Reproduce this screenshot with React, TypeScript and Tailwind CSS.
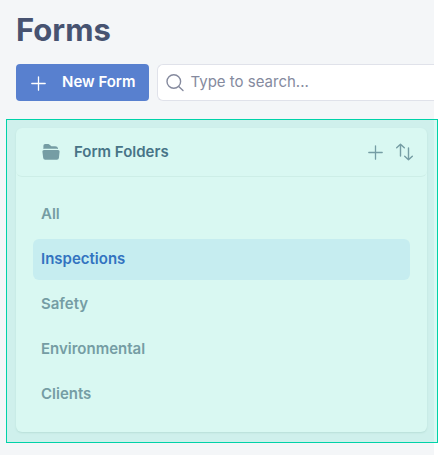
import React, { useState } from 'react';

const FOLDERS = ['All', 'Inspections', 'Safety', 'Environmental', 'Clients'];

const PlusIcon: React.FC<{ className?: string }> = ({ className }) => (
  <svg viewBox="0 0 16 16" fill="none" stroke="currentColor" strokeWidth="1.3" strokeLinecap="round" className={className} aria-hidden="true">
    <path d="M8.5 1.8v13.4M1.8 8.5h13.4" />
  </svg>
);

const SearchIcon: React.FC = () => (
  <svg viewBox="0 0 18 18" fill="none" stroke="currentColor" strokeWidth="1.4" strokeLinecap="round" className="h-[18px] w-[18px] shrink-0 text-[#858a9e]" aria-hidden="true">
    <circle cx="7.8" cy="7.5" r="6.8" />
    <path d="M12.7 12.4l4.3 4.1" />
  </svg>
);

const FolderIcon: React.FC = () => (
  <svg viewBox="0 0 18 18" fill="currentColor" className="h-[18px] w-[18px]" aria-hidden="true">
    <path d="M1.4 6.1V2.8Q1.4 1.1 3.1 1.1H6.3Q7 1.1 7.6 1.7L9.4 3.2H13.2Q15.6 3.2 16 5.2V6.1Q15.6 5.8 15 5.8H2.5Q1.8 5.8 1.4 6.1Z" />
    <path d="M2 7.1H16Q17.7 7.1 17.6 8.6L16.9 15Q16.7 16.7 14.9 16.7H3.2Q1.4 16.7 1.2 15L.4 8.6Q.3 7.1 2 7.1Z" />
  </svg>
);

const SortIcon: React.FC = () => (
  <svg viewBox="0 0 18 18" fill="none" stroke="currentColor" strokeWidth="1.4" strokeLinecap="round" strokeLinejoin="round" className="h-[18px] w-[18px]" aria-hidden="true">
    <path d="M5.5 13V1.2M1.7 4.8l3.8-3.6 3.8 3.6M13.5 5v11.8M9.7 13.2l3.8 3.6 3.8-3.6" />
  </svg>
);

const App: React.FC = () => {
  const [selected, setSelected] = useState('Inspections');
  const [query, setQuery] = useState('');

  return (
    <div className="overflow-hidden bg-white pr-2 pb-1 font-['Inter',sans-serif]">
      <main className="bg-[#f4f6f8] py-3">
        <h1 className="px-4 text-[31px] leading-9 font-bold text-[#475371]">Forms</h1>

        <div className="mt-4 flex h-[37px] gap-2 pl-4">
          <button className="flex shrink-0 items-center gap-4 rounded bg-[#5880cf] px-3.5 text-[15px] font-semibold text-white">
            <PlusIcon className="h-4 w-4" />
            New Form
          </button>
          <label className="flex min-w-0 flex-1 items-center gap-1.5 rounded-l-md border border-r-0 border-[#e0e2ea] bg-white px-2">
            <SearchIcon />
            <input
              type="text"
              aria-label="Search forms"
              placeholder="Type to search..."
              value={query}
              onChange={(e) => setQuery(e.target.value)}
              className="min-w-0 flex-1 bg-transparent text-[15px] text-[#475371] outline-none placeholder:text-[#858a9e]"
            />
          </label>
        </div>

        <section className="mt-[18px] -mr-1 ml-1.5 border border-[#00d2a8] bg-[#00d2a8]/15 pt-2 pr-2.5 pb-2.5 pl-[9px]">
          <div className="rounded-md bg-[#d9f8f2] shadow-[0_1px_2px_#b9dfd8]">
            <header className="flex h-[49px] items-center rounded-md border-b border-[#cdeee7] pr-3.5 pl-[26px] text-[#759da4]">
              <FolderIcon />
              <h2 className="ml-3.5 flex-1 text-[15px] font-semibold text-[#477487]">Form Folders</h2>
              <button aria-label="Add folder" className="mr-3">
                <PlusIcon className="h-4 w-4" />
              </button>
              <button aria-label="Sort folders">
                <SortIcon />
              </button>
            </header>

            <nav className="flex flex-col gap-1 px-[17px] py-[17px]">
              {FOLDERS.map((folder) => (
                <button
                  key={folder}
                  onClick={() => setSelected(folder)}
                  className={`h-[41px] rounded-md px-2 text-left text-[15px] font-semibold ${
                    folder === selected ? 'bg-[#c6edf0] text-[#3273c0]' : 'text-[#759da4]'
                  }`}
                >
                  {folder}
                </button>
              ))}
            </nav>
          </div>
        </section>
      </main>
    </div>
  );
};

export default App;
